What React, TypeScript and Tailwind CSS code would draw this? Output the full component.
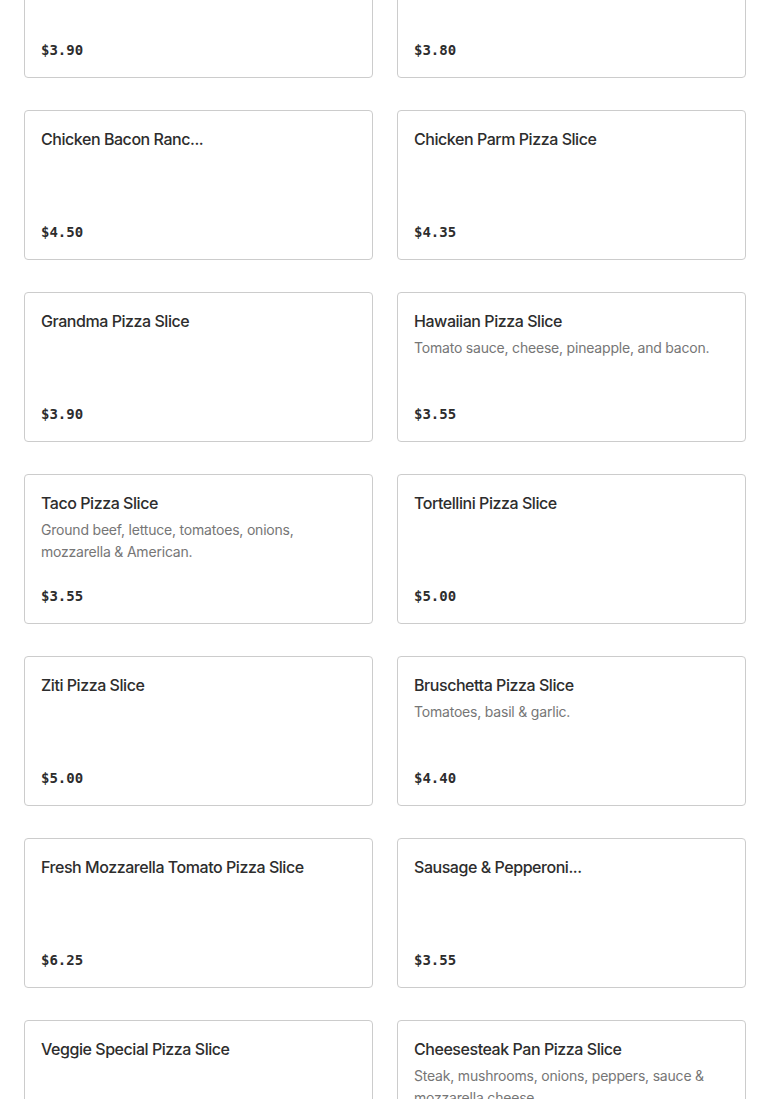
const items = [
  { name: 'Cheese Pizza Slice', price: '$3.90' },
  { name: 'Plain Pizza Slice', price: '$3.80' },
  { name: 'Chicken Bacon Ranc...', price: '$4.50' },
  { name: 'Chicken Parm Pizza Slice', price: '$4.35' },
  { name: 'Grandma Pizza Slice', price: '$3.90' },
  { name: 'Hawaiian Pizza Slice', desc: 'Tomato sauce, cheese, pineapple, and bacon.', price: '$3.55' },
  { name: 'Taco Pizza Slice', desc: 'Ground beef, lettuce, tomatoes, onions, mozzarella & American.', price: '$3.55' },
  { name: 'Tortellini Pizza Slice', price: '$5.00' },
  { name: 'Ziti Pizza Slice', price: '$5.00' },
  { name: 'Bruschetta Pizza Slice', desc: 'Tomatoes, basil & garlic.', price: '$4.40' },
  { name: 'Fresh Mozzarella Tomato Pizza Slice', price: '$6.25' },
  { name: 'Sausage & Pepperoni...', price: '$3.55' },
  { name: 'Veggie Special Pizza Slice', price: '$4.25' },
  { name: 'Cheesesteak Pan Pizza Slice', desc: 'Steak, mushrooms, onions, peppers, sauce & mozzarella cheese.', price: '$5.25' },
]

function MenuCard({ name, desc, price }: { name: string; desc?: string; price: string }) {
  return (
    <div className="h-[150px] flex flex-col rounded border border-[#cccccc] bg-white p-4 overflow-hidden">
      <h3 className="text-[16px] leading-6 font-medium text-[#2d2d2d] font-['Inter',sans-serif] tracking-[-0.45px]">{name}</h3>
      {desc && (
        <p className="mt-1 text-[14px] leading-[22px] text-[#767676] font-['Inter',sans-serif] tracking-[-0.2px]">{desc}</p>
      )}
      <div className="mt-auto text-[14px] leading-[22px] font-bold text-[#2d2d2d] font-['DejaVu_Sans_Mono',monospace]">
        {price}
      </div>
    </div>
  )
}

export default function App() {
  return (
    <main className="min-h-screen bg-white overflow-hidden">
      <div className="-mt-[72px] px-6 grid grid-cols-2 gap-x-6 gap-y-8">
        {items.map((item) => (
          <MenuCard key={item.name} {...item} />
        ))}
      </div>
    </main>
  )
}
